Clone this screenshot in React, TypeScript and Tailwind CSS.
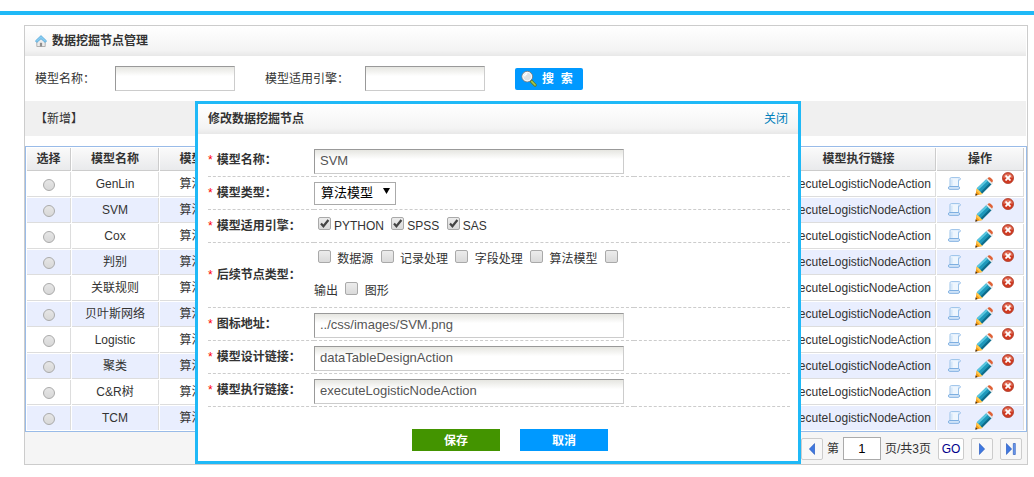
import { useId, type ReactNode } from "react";

const models = [
  "GenLin",
  "SVM",
  "Cox",
  "判别",
  "关联规则",
  "贝叶斯网络",
  "Logistic",
  "聚类",
  "C&R树",
  "TCM",
];

const insetField =
  "border border-t-[#999] border-l-[#999] border-r-[#ccc] border-b-[#ccc] rounded-none bg-white bg-linear-to-b from-[#e6e6e1] to-white to-40% text-[#555] outline-none";

const barGradient = "bg-linear-to-b from-white via-[#f4f4f4] via-80% to-[#e8e8e8]";

function HomeIcon() {
  return (
    <svg viewBox="0 0 12 12" className="size-3 shrink-0" aria-hidden="true">
      <path d="M1.800 6.200 6 2.800l4.200 3.400v5.300H1.800z" fill="#ececec" stroke="#a2a2a2" strokeWidth=".8" />
      <path d="M4.900 11.500V7.800h2.200v3.700z" fill="#8f8f8f" />
      <path d="M.4 5.900 6 .6 11.600 5.900l-1.400 1.500L6 3.800 1.800 7.400z" fill="#86cdf3" stroke="#4a9fd2" strokeWidth=".7" />
    </svg>
  );
}

function MagnifierIcon() {
  return (
    <svg viewBox="0 0 16 17" className="h-[17px] w-4 shrink-0" aria-hidden="true">
      <path d="m10.200 11.200 3.900 3.900" stroke="#5c7a26" strokeWidth="3.200" strokeLinecap="round" />
      <path d="m10.800 11.600 3.300 3.400" stroke="#a4c94e" strokeWidth="1.600" strokeLinecap="round" />
      <circle cx="6.200" cy="6.600" r="5.300" fill="#dfe1e3" stroke="#7b7f83" strokeWidth="1" />
      <circle cx="6.200" cy="6.600" r="4.300" fill="none" stroke="#fff" strokeWidth="1" />
      <path d="M3.600 6.400c.2-1.600 1.200-2.500 2.700-2.600" stroke="#fff" strokeWidth="1.400" fill="none" />
    </svg>
  );
}

function ScrollIcon() {
  return (
    <svg viewBox="0 0 13 13" className="size-[13px] shrink-0" aria-hidden="true">
      <path
        d="M2 2.300C2 1 2.500.6 3.300.6h7.600c1 0 1.500.6 1.500 1.300 0 .8-.5 1.200-1.300 1.200h-.6v6.500H2z"
        fill="#eef6fe"
        stroke="#8fbbe6"
        strokeWidth=".9"
      />
      <path
        d="M1.400 9.600h9.100c.7 0 1 .5 1 1.300s-.4 1.400-1.200 1.400H1.600C.8 12.300.5 11.700.5 10.900s.4-1.300.9-1.300z"
        fill="#d9eafb"
        stroke="#6fa5dc"
        strokeWidth=".9"
      />
      <path d="M3.900 2.500v6.300M10.500 1.500v1.600" stroke="#c3dcf5" strokeWidth=".9" />
    </svg>
  );
}

function PencilIcon() {
  return (
    <svg viewBox="0 0 18 19" className="h-[19px] w-[18px] shrink-0" aria-hidden="true">
      <path d="m.4 18.600 1.300-7 5.700 5.400z" fill="#f39a14" />
      <path d="m1.700 11.600 1.900-.2 3.900 3.800-.1 1.800-2.300.4-3.600-3.500z" fill="#ffc84e" />
      <path d="m.3 18.700.5-2.400 1.800 1.800z" fill="#3a2a20" />
      <path d="M1.900 11.200 11.300 2.300l5.100 4.900-9.200 9.200z" fill="#1e98ba" />
      <path d="m1.900 11.200 9.400-8.900 1.600 1.500-9.400 9z" fill="#58c6df" />
      <path d="m5.800 14.900 9.200-9.100 1.400 1.400-9.200 9.200z" fill="#0f6b89" />
      <path d="m11.300 2.300 1.100-1.100 5.100 4.900-1.100 1.100z" fill="#eef1f3" stroke="#a7b2b8" strokeWidth=".4" />
      <path d="m12.600 1.400.6-.6c.8-.7 1.900-.6 2.700.2l1.300 1.300c.8.8.9 1.700.3 2.600l-.6.700z" fill="#df6237" />
    </svg>
  );
}

function DeleteIcon() {
  return (
    <svg viewBox="0 0 12 12" className="size-3 shrink-0" aria-hidden="true">
      <circle cx="6" cy="6" r="5.600" fill="#cf3a22" stroke="#ab3824" strokeWidth=".7" />
      <path d="M1.100 5.400a5 5 0 0 1 9.800 0C8 6.200 4 6.200 1.100 5.400z" fill="#e0705a" />
      <path d="m4.100 4.100 3.800 3.800M7.900 4.100 4.100 7.900" stroke="#fff" strokeWidth="1.900" strokeLinecap="round" />
    </svg>
  );
}

function Tick({ label, checked, spaced }: { label: string; checked?: boolean; spaced?: boolean }) {
  const id = useId();
  return (
    <>
      <span className="mr-[3px] ml-1 inline-grid">
        <input
          id={id}
          type="checkbox"
          defaultChecked={checked}
          className="peer col-start-1 row-start-1 size-[13px] appearance-none rounded-xs border border-[#a9a9a9] bg-linear-to-b from-[#ececec] to-[#dadada]"
        />
        <svg
          viewBox="0 0 13 13"
          className="pointer-events-none invisible col-start-1 row-start-1 size-[13px] peer-checked:visible"
          aria-hidden="true"
        >
          <path d="m3 6.600 2.400 2.700L10.400 3" fill="none" stroke="#444" strokeWidth="2.200" />
        </svg>
      </span>
      {spaced ? " " : null}
      <label htmlFor={id}>{label}</label>{" "}
    </>
  );
}

function FormRow({ label, htmlFor, children }: { label: string; htmlFor?: string; children: ReactNode }) {
  const cell = "border-b border-dashed border-[#ccc]";
  return (
    <div className="grid grid-cols-[106px_320px_1fr]">
      <div className={`${cell} flex items-center gap-1`}>
        <span className="text-[#f00]">*</span>
        <label htmlFor={htmlFor} className="font-bold">
          {label}
        </label>
      </div>
      <div className={`${cell} min-h-[33px] leading-8`}>{children}</div>
      <div className={cell} />
    </div>
  );
}

function TextRow({ label, value }: { label: string; value: string }) {
  const id = useId();
  return (
    <FormRow label={label} htmlFor={id}>
      <div className="flex h-8 items-center pt-0.5">
        <input id={id} type="text" defaultValue={value} className={`${insetField} h-[25px] w-[310px] px-[5px] text-[13px]`} />
      </div>
    </FormRow>
  );
}

function EditDialog() {
  return (
    <div
      role="dialog"
      aria-labelledby="dialog-title"
      className="absolute top-[101px] left-[195px] w-[606px] border-3 border-[#1fb9f7] bg-white"
    >
      <div className={`flex h-[30px] items-center justify-between px-2.5 ${barGradient}`}>
        <h2 id="dialog-title" className="font-bold">
          修改数据挖掘节点
        </h2>
        <a href="#close" className="text-[#0080bb]">
          关闭
        </a>
      </div>
      <form className="pt-2.5 pr-2 pb-2.5 pl-2.5">
        <TextRow label="模型名称：" value="SVM" />
        <FormRow label="模型类型：" htmlFor="model-type">
          <div className="flex h-8 items-center">
            <span className="inline-grid items-center">
              <select
                id="model-type"
                className="col-start-1 row-start-1 h-[23px] w-[82px] appearance-none border border-[#aaa] bg-white pl-1.5 text-[13px] leading-5 text-black"
              >
                <option>算法模型</option>
              </select>
              <svg
                viewBox="0 0 7 6"
                className="pointer-events-none col-start-1 row-start-1 mr-1.5 mb-1 h-1.5 w-[7px] justify-self-end"
                aria-hidden="true"
              >
                <path d="M0 0h7L3.500 6z" fill="#000" />
              </svg>
            </span>
          </div>
        </FormRow>
        <FormRow label="模型适用引擎：">
          <Tick label="PYTHON" checked />
          <Tick label="SPSS" checked />
          <Tick label="SAS" checked />
        </FormRow>
        <FormRow label="后续节点类型：">
          <Tick label="数据源" spaced />
          <Tick label="记录处理" spaced />
          <Tick label="字段处理" spaced />
          <Tick label="算法模型" spaced />
          <Tick label="输出" spaced />
          <Tick label="图形" spaced />
        </FormRow>
        <TextRow label="图标地址：" value="../css/images/SVM.png" />
        <TextRow label="模型设计链接：" value="dataTableDesignAction" />
        <TextRow label="模型执行链接：" value="executeLogisticNodeAction" />
        <div className="mt-[22px] flex justify-center gap-5 pl-[22px]">
          <button type="button" className="h-[22px] w-[88px] bg-[#439400] pt-0.5 font-bold text-white">
            保存
          </button>
          <button type="button" className="h-[22px] w-[88px] bg-[#0099ff] pt-0.5 font-bold text-white">
            取消
          </button>
        </div>
      </form>
    </div>
  );
}

function PageButton({ label, children }: { label: string; children: ReactNode }) {
  return (
    <button
      type="button"
      aria-label={label}
      className="flex h-[22px] w-[22px] items-center justify-center rounded-xs border border-[#ccc] bg-[#f8f8f8]"
    >
      {children}
    </button>
  );
}

function Pager() {
  return (
    <div className="flex h-8 items-center justify-end gap-[7px] bg-[#f5f5f5] pt-px pr-[5px]">
      <div className="flex items-center gap-1">
        <PageButton label="上一页">
          <svg viewBox="0 0 6 12" className="h-3 w-1.5" aria-hidden="true">
            <path d="M5.700.5v11L.4 6z" fill="#3f78e0" stroke="#1d4fb5" strokeWidth=".6" />
          </svg>
        </PageButton>
        <label htmlFor="page-number">第</label>
        <input
          id="page-number"
          type="text"
          defaultValue="1"
          className="h-[23px] w-[38px] border border-[#aaa] bg-white text-center text-[13px] text-black outline-none"
        />
        <span>页/共3页</span>
      </div>
      <button type="button" className="h-[22px] w-[26px] rounded-xs border border-[#ccc] bg-white text-[#00008b]">
        GO
      </button>
      <PageButton label="下一页">
        <svg viewBox="0 0 6 12" className="h-3 w-1.5" aria-hidden="true">
          <path d="M.3.5v11L5.600 6z" fill="#3f78e0" stroke="#1d4fb5" strokeWidth=".6" />
        </svg>
      </PageButton>
      <PageButton label="末页">
        <svg viewBox="0 0 10 12" className="h-3 w-2.5" aria-hidden="true">
          <path d="M.3.5v11L5.600 6z" fill="#3f78e0" stroke="#1d4fb5" strokeWidth=".6" />
          <path d="M7.300.5h2v11h-2z" fill="#6f9cf0" stroke="#1d4fb5" strokeWidth=".6" />
        </svg>
      </PageButton>
    </div>
  );
}

function ModelTable() {
  const th =
    "h-[23px] border-r border-b border-[#ccc] bg-linear-to-b from-[#fafafa] to-[#e9eaec] p-0 text-center font-bold";
  const td = "border-r border-b border-[#ddd] p-0 text-center group-last:border-b-0 group-even:bg-[#e9eefe]";
  return (
    <div className="border border-[#99bbe8] pr-px">
      <table className="w-full table-fixed border-separate border-spacing-px leading-4">
        <colgroup>
          <col className="w-11" />
          <col className="w-[87px]" />
          <col className="w-[88px]" />
          <col />
          <col className="w-[154px]" />
          <col className="w-[87px]" />
        </colgroup>
        <thead>
          <tr>
            <th className={th}>选择</th>
            <th className={th}>模型名称</th>
            <th className={th}>模型类型</th>
            <th className={th} />
            <th className={th}>模型执行链接</th>
            <th className={th}>操作</th>
          </tr>
        </thead>
        <tbody>
          {models.map((name) => (
            <tr key={name} className="group">
              <td className={td}>
                <input
                  type="radio"
                  name="model"
                  aria-label={name}
                  className="mx-auto mt-px block size-3 appearance-none rounded-full border border-[#aaa] bg-linear-to-b from-[#e6e6e6] to-[#d8d8d8]"
                />
              </td>
              <td className={td}>{name}</td>
              <td className={td}>算法模型</td>
              <td className={td} />
              <td className={td}>executeLogisticNodeAction</td>
              <td className={td}>
                <div className="flex h-6 pl-[11px]">
                  <button type="button" aria-label="查看" className="mt-[5px] mr-3.5 self-start">
                    <ScrollIcon />
                  </button>
                  <button type="button" aria-label="编辑" className="mr-[9px] self-end">
                    <PencilIcon />
                  </button>
                  <button type="button" aria-label="删除" className="self-start">
                    <DeleteIcon />
                  </button>
                </div>
              </td>
            </tr>
          ))}
        </tbody>
      </table>
    </div>
  );
}

export default function App() {
  return (
    <div className="relative bg-white pt-[11px] font-['Liberation_Sans','Noto_Sans_CJK_SC',sans-serif] text-xs text-[#333]">
      <div className="h-1 bg-[#1fb9f7]" />
      <main className="mt-2.5 mr-1.5 ml-6 border border-[#ccc]">
        <h1 className={`mr-px flex h-[30px] items-center gap-[5px] pl-2.5 font-bold ${barGradient}`}>
          <HomeIcon />
          数据挖掘节点管理
        </h1>
        <form className="flex h-[45px] items-center pl-2.5">
          <label htmlFor="search-name" className="w-20">
            模型名称：
          </label>
          <input id="search-name" type="text" className={`${insetField} h-[25px] w-[120px] px-1`} />
          <label htmlFor="search-engine" className="ml-[30px] w-[100px]">
            模型适用引擎：
          </label>
          <input id="search-engine" type="text" className={`${insetField} h-[25px] w-[120px] px-1`} />
          <button
            type="button"
            className="ml-[30px] flex h-[22px] w-[68px] items-center gap-[5px] rounded-xs bg-[#0099ff] pl-1.5 font-bold whitespace-pre text-white"
          >
            <MagnifierIcon />
            {"搜  索"}
          </button>
        </form>
        <div className="mr-px mb-2.5 flex h-[35px] items-center bg-[#f0f0f0] pl-2.5">
          <a href="#new">【新增】</a>
        </div>
        <ModelTable />
        <Pager />
      </main>
      <EditDialog />
    </div>
  );
}
